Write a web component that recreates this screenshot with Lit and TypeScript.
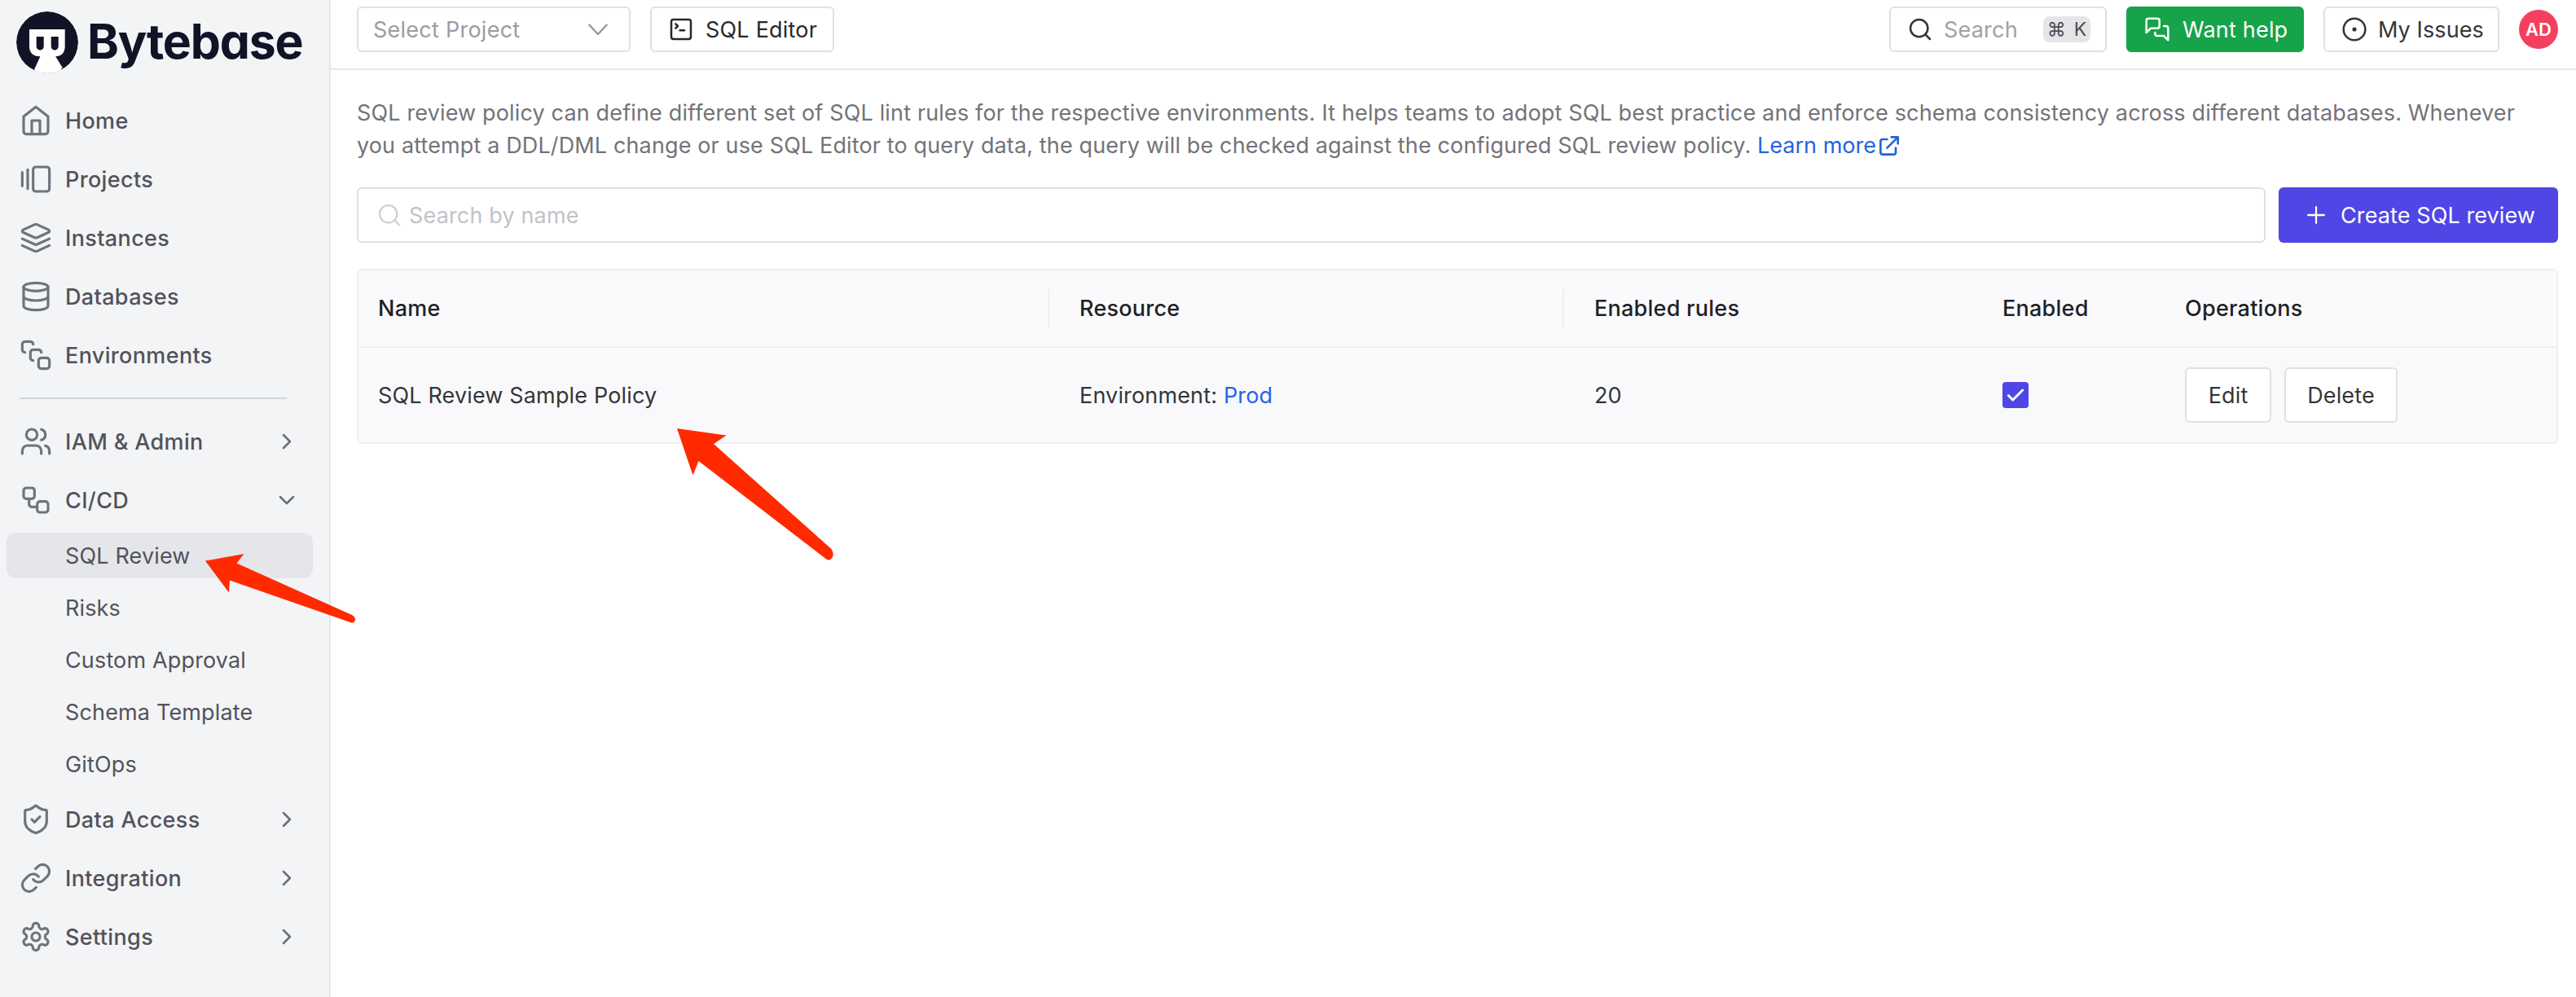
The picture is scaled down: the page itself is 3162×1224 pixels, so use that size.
import { LitElement, html, css, svg, nothing, TemplateResult, SVGTemplateResult } from "lit";
import { customElement, property } from "lit/decorators.js";
import { classMap } from "lit/directives/class-map.js";

const ICONS: Record<string, SVGTemplateResult> = {
  home: svg`<path d="m3 9 9-7 9 7v11a2 2 0 0 1-2 2H5a2 2 0 0 1-2-2z"/><path d="M9 22V12h6v10"/>`,
  projects: svg`<path d="M2 7v10"/><path d="M6 5v14"/><rect width="12" height="18" x="10" y="3" rx="2"/>`,
  layers: svg`<path d="m12.83 2.18a2 2 0 0 0-1.66 0L2.6 6.08a1 1 0 0 0 0 1.83l8.58 3.91a2 2 0 0 0 1.66 0l8.58-3.9a1 1 0 0 0 0-1.83Z"/><path d="m22 17.65-9.17 4.16a2 2 0 0 1-1.66 0L2 17.65"/><path d="m22 12.65-9.17 4.16a2 2 0 0 1-1.66 0L2 12.65"/>`,
  database: svg`<ellipse cx="12" cy="5" rx="9" ry="3"/><path d="M3 5V19A9 3 0 0 0 21 19V5"/><path d="M3 12A9 3 0 0 0 21 12"/>`,
  stack: svg`<path d="M4 10c-1.1 0-2-.9-2-2V4c0-1.1.9-2 2-2h4c1.1 0 2 .9 2 2"/><path d="M10 16c-1.1 0-2-.9-2-2v-4c0-1.1.9-2 2-2h4c1.1 0 2 .9 2 2"/><rect width="8" height="8" x="14" y="14" rx="2"/>`,
  users: svg`<path d="M16 21v-2a4 4 0 0 0-4-4H6a4 4 0 0 0-4 4v2"/><circle cx="9" cy="7" r="4"/><path d="M22 21v-2a4 4 0 0 0-3-3.87"/><path d="M16 3.13a4 4 0 0 1 0 7.75"/>`,
  workflow: svg`<rect width="8" height="8" x="3" y="3" rx="2"/><path d="M7 11v4a2 2 0 0 0 2 2h4"/><rect width="8" height="8" x="13" y="13" rx="2"/>`,
  shield: svg`<path d="M20 13c0 5-3.5 7.5-7.66 8.95a1 1 0 0 1-.67-.01C7.5 20.5 4 18 4 13V6a1 1 0 0 1 1-1c2 0 4.5-1.2 6.24-2.72a1.17 1.17 0 0 1 1.52 0C14.51 3.81 17 5 19 5a1 1 0 0 1 1 1z"/><path d="m9 12 2 2 4-4"/>`,
  link: svg`<path d="M10 13a5 5 0 0 0 7.54.54l3-3a5 5 0 0 0-7.07-7.07l-1.72 1.71"/><path d="M14 11a5 5 0 0 0-7.54-.54l-3 3a5 5 0 0 0 7.07 7.07l1.71-1.71"/>`,
  settings: svg`<path d="M12.22 2h-.44a2 2 0 0 0-2 2v.18a2 2 0 0 1-1 1.73l-.43.25a2 2 0 0 1-2 0l-.15-.08a2 2 0 0 0-2.73.73l-.22.38a2 2 0 0 0 .73 2.73l.15.1a2 2 0 0 1 1 1.72v.51a2 2 0 0 1-1 1.74l-.15.09a2 2 0 0 0-.73 2.73l.22.38a2 2 0 0 0 2.73.73l.15-.08a2 2 0 0 1 2 0l.43.25a2 2 0 0 1 1 1.73V20a2 2 0 0 0 2 2h.44a2 2 0 0 0 2-2v-.18a2 2 0 0 1 1-1.73l.43-.25a2 2 0 0 1 2 0l.15.08a2 2 0 0 0 2.73-.73l.22-.39a2 2 0 0 0-.73-2.73l-.15-.08a2 2 0 0 1-1-1.74v-.5a2 2 0 0 1 1-1.74l.15-.09a2 2 0 0 0 .73-2.73l-.22-.38a2 2 0 0 0-2.73-.73l-.15.08a2 2 0 0 1-2 0l-.43-.25a2 2 0 0 1-1-1.73V4a2 2 0 0 0-2-2z"/><circle cx="12" cy="12" r="3"/>`,
  chevronRight: svg`<path d="m9 18 6-6-6-6"/>`,
  chevronDown: svg`<path d="m6 9 6 6 6-6"/>`,
  selectArrow: svg`<path d="m4 8 8 8.5 8-8.5"/>`,
  terminal: svg`<path d="m7 11 2-2-2-2"/><path d="M11 13h4"/><rect width="18" height="18" x="3" y="3" rx="2"/>`,
  search: svg`<circle cx="11" cy="11" r="8"/><path d="m21 21-4.3-4.3"/>`,
  messages: svg`<path d="M14 9a2 2 0 0 1-2 2H6l-4 4V4a2 2 0 0 1 2-2h8a2 2 0 0 1 2 2z"/><path d="M18 9h2a2 2 0 0 1 2 2v11l-4-4h-6a2 2 0 0 1-2-2v-1"/>`,
  circleDot: svg`<circle cx="12" cy="12" r="10"/><circle cx="12" cy="12" r="1"/>`,
  external: svg`<path d="M10 6H6a2 2 0 0 0-2 2v10a2 2 0 0 0 2 2h10a2 2 0 0 0 2-2v-4"/><path d="M14 4h6v6"/><path d="M20 4 10 14"/>`,
  plus: svg`<path d="M12 4.6v14.8"/><path d="M4.6 12h14.8"/>`,
  check: svg`<path d="m4 12.5 5 5 11-11"/>`,
};

@customElement("ui-icon")
class UiIcon extends LitElement {
  @property() name = "";
  static styles = css`
    :host {
      display: inline-block;
      flex: none;
      width: 32px;
      height: 32px;
    }
    svg {
      display: block;
      width: 100%;
      height: 100%;
      fill: none;
      stroke: currentColor;
      stroke-width: var(--stroke, 2);
      stroke-linecap: round;
      stroke-linejoin: round;
    }
  `;
  render() {
    return html`<svg viewBox="0 0 24 24">${ICONS[this.name]}</svg>`;
  }
}

interface NavItem {
  label: string;
  icon: string;
  arrow?: "chevronRight" | "chevronDown";
  children?: string[];
}

const PRIMARY: NavItem[] = [
  { label: "Home", icon: "home" },
  { label: "Projects", icon: "projects" },
  { label: "Instances", icon: "layers" },
  { label: "Databases", icon: "database" },
  { label: "Environments", icon: "stack" },
];

const SECONDARY: NavItem[] = [
  { label: "IAM & Admin", icon: "users", arrow: "chevronRight" },
  {
    label: "CI/CD",
    icon: "workflow",
    arrow: "chevronDown",
    children: ["SQL Review", "Risks", "Custom Approval", "Schema Template", "GitOps"],
  },
  { label: "Data Access", icon: "shield", arrow: "chevronRight" },
  { label: "Integration", icon: "link", arrow: "chevronRight" },
  { label: "Settings", icon: "settings", arrow: "chevronRight" },
];

@customElement("app-sidebar")
class AppSidebar extends LitElement {
  @property() active = "SQL Review";
  static styles = css`
    :host {
      display: flex;
      flex-direction: column;
      box-sizing: border-box;
      width: 406px;
      height: 100%;
      background: #f3f4f6;
      border-right: 2px solid #e4e5e8;
      color: #52525b;
    }
    .brand {
      display: flex;
      align-items: flex-start;
      height: 76px;
      padding: 14px 0 30px 20px;
      color: #111427;
    }
    .mark {
      width: 76px;
      height: 76px;
    }
    .wordmark {
      margin-left: 11px;
      font-size: 59px;
      line-height: 73px;
      font-weight: 700;
      letter-spacing: -1.25px;
      font-feature-settings: "cv11";
      white-space: nowrap;
    }
    .nav {
      display: flex;
      flex-direction: column;
      gap: 16px;
    }
    .item {
      display: flex;
      align-items: center;
      height: 56px;
      padding: 0 36px 0 24px;
      font-weight: 500;
      letter-spacing: 0.35px;
      white-space: nowrap;
    }
    .icon {
      width: 40px;
      height: 40px;
      color: #6f737d;
      --stroke: 1.9;
    }
    .label {
      flex: 1;
      margin-left: 16px;
    }
    .arrow {
      color: #6b6e76;
      --stroke: 1.9;
    }
    .divider {
      height: 2px;
      margin: 24px 52px 24px 24px;
      background: #d3d5d8;
    }
    .children {
      display: flex;
      flex-direction: column;
      gap: 8px;
      margin: -4px 0;
    }
    .child {
      display: flex;
      align-items: center;
      height: 56px;
      margin: 0 20px 0 8px;
      padding-left: 72px;
      border-radius: 12px;
      letter-spacing: 0.15px;
    }
    .child.active {
      background: #e5e6ea;
    }
  `;

  private item(i: NavItem): TemplateResult {
    return html`<div class="item">
        <ui-icon class="icon" name=${i.icon}></ui-icon>
        <span class="label">${i.label}</span>
        ${i.arrow ? html`<ui-icon class="arrow" name=${i.arrow}></ui-icon>` : nothing}
      </div>
      ${i.children
        ? html`<div class="children">
            ${i.children.map(
              (c) => html`<div class=${classMap({ child: true, active: c === this.active })}>${c}</div>`
            )}
          </div>`
        : nothing}`;
  }

  render() {
    return html`
      <div class="brand">
        <svg class="mark" viewBox="0 0 76 76">
          <defs><clipPath id="disc"><circle cx="38" cy="38" r="38" /></clipPath></defs>
          <g clip-path="url(#disc)">
            <circle cx="38" cy="38" r="38" fill="#111427" />
            <path
              fill="#fff"
              d="M16 22H59.7V43C59.7 51 55 55.3 48 55.3L57 76H21L30.5 55.3H29C21 55.3 16 51 16 43Z"
            />
            <path fill="#fff" d="M29.5 55L22 71.5Q38 80 57 69.5L48 55Z" />
            <path
              fill="#111427"
              d="M24.7 31H33.7V43a4.5 4.5 0 0 1-9 0ZM42.7 31H51.7V43a4.5 4.5 0 0 1-9 0Z"
            />
          </g>
        </svg>
        <span class="wordmark">Bytebase</span>
      </div>
      <nav class="nav">${PRIMARY.map((i) => this.item(i))}</nav>
      <div class="divider"></div>
      <nav class="nav">${SECONDARY.map((i) => this.item(i))}</nav>
    `;
  }
}

@customElement("app-header")
class AppHeader extends LitElement {
  static styles = css`
    :host {
      display: flex;
      justify-content: space-between;
      box-sizing: border-box;
      height: 86px;
      padding: 8px 22px 0 32px;
      border-bottom: 2px solid #e5e6e9;
    }
    .group {
      display: flex;
      gap: 24px;
      height: 56px;
      align-items: center;
    }
    .box {
      display: flex;
      align-items: center;
      box-sizing: border-box;
      height: 56px;
      border: 2px solid #e0e0e5;
      border-radius: 6px;
      color: #333639;
      white-space: nowrap;
      letter-spacing: 0.2px;
    }
    .box ui-icon {
      --stroke: 1.9;
    }
    .select {
      width: 336px;
      padding: 0 22px 0 18px;
      justify-content: space-between;
      color: #9b9ca3;
      letter-spacing: 0.25px;
    }
    .editor {
      width: 226px;
      padding-left: 20px;
      gap: 14px;
      color: #29292c;
    }
    .search {
      width: 267px;
      padding: 0 18px 0 20px;
    }
    .hint {
      flex: 1;
      margin-left: 13px;
      color: #a1a1a8;
    }
    .kbd {
      display: flex;
      align-items: center;
      justify-content: center;
      gap: 10px;
      width: 58px;
      height: 32px;
      border-radius: 8px;
      background: #e5e5e7;
      color: #4c4d52;
      font-size: 23px;
      line-height: 32px;
      letter-spacing: 0;
    }
    .help {
      width: 218px;
      padding-left: 20px;
      gap: 15px;
      background: #16a34a;
      border-color: #16a34a;
      color: #fff;
    }
    .issues {
      width: 216px;
      padding-left: 20px;
      gap: 13px;
      letter-spacing: 0.1px;
    }
    .avatar {
      display: flex;
      align-items: center;
      justify-content: center;
      width: 48px;
      height: 48px;
      border-radius: 50%;
      background: #f43f5e;
      color: #fff;
      font-size: 22px;
      font-weight: 600;
    }
  `;
  render() {
    return html`
      <div class="group">
        <div class="box select"><span>Select Project</span><ui-icon name="selectArrow"></ui-icon></div>
        <div class="box editor"><ui-icon name="terminal"></ui-icon>SQL Editor</div>
      </div>
      <div class="group">
        <div class="box search">
          <ui-icon name="search"></ui-icon>
          <span class="hint">Search</span>
          <span class="kbd"><span>⌘</span><span>K</span></span>
        </div>
        <div class="box help"><ui-icon name="messages"></ui-icon>Want help</div>
        <div class="box issues"><ui-icon name="circleDot"></ui-icon>My Issues</div>
        <div class="avatar">AD</div>
      </div>
    `;
  }
}

interface Policy {
  name: string;
  scope: string;
  target: string;
  rules: number;
}

const POLICIES: Policy[] = [
  { name: "SQL Review Sample Policy", scope: "Environment:", target: "Prod", rules: 20 },
];

@customElement("policy-table")
class PolicyTable extends LitElement {
  static styles = css`
    :host {
      display: block;
      border: 2px solid #efeff3;
      border-radius: 6px;
      background: #fafafc;
      color: #333639;
      overflow: hidden;
    }
    .row {
      display: grid;
      grid-template-columns: 861px 632px 501px 224px 1fr;
      align-items: center;
      height: 116px;
      background: #f9f9fb;
    }
    .head {
      height: 93px;
      background: #fafafc;
      border-bottom: 2px solid #efeff2;
      color: #1f2225;
      font-weight: 500;
    }
    .cell {
      display: flex;
      align-items: center;
      padding-left: 24px;
      letter-spacing: 0.15px;
      white-space: pre;
    }
    .head .cell {
      letter-spacing: 0.25px;
    }
    .resizable {
      justify-content: space-between;
      padding-right: 13px;
    }
    .grip {
      width: 2px;
      height: 48px;
      background: #efeff2;
    }
    .link {
      color: #2563eb;
    }
    .ops {
      gap: 16px;
    }
    .button {
      box-sizing: border-box;
      width: 139px;
      height: 68px;
      border: 2px solid #e0e0e5;
      border-radius: 6px;
      background: #fff;
      line-height: 65px;
      text-align: center;
    }
    .edit {
      width: 106px;
    }
    .checkbox {
      display: flex;
      align-items: center;
      justify-content: center;
      width: 32px;
      height: 32px;
      border-radius: 4px;
      background: #4f46e5;
      color: #fff;
    }
    .checkbox ui-icon {
      width: 26px;
      height: 26px;
      --stroke: 2.8;
    }
  `;
  render() {
    return html`
      <div class="row head">
        <div class="cell resizable">Name<span class="grip"></span></div>
        <div class="cell resizable">Resource<span class="grip"></span></div>
        <div class="cell">Enabled rules</div>
        <div class="cell">Enabled</div>
        <div class="cell">Operations</div>
      </div>
      ${POLICIES.map(
        (p) => html`<div class="row">
          <div class="cell">${p.name}</div>
          <div class="cell">${p.scope} <span class="link">${p.target}</span></div>
          <div class="cell">${p.rules}</div>
          <div class="cell"><span class="checkbox"><ui-icon name="check"></ui-icon></span></div>
          <div class="cell ops"><span class="button edit">Edit</span><span class="button">Delete</span></div>
        </div>`
      )}
    `;
  }
}

@customElement("app-root")
class AppRoot extends LitElement {
  static styles = css`
    :host {
      display: flex;
      position: relative;
      width: 3162px;
      height: 1224px;
      overflow: hidden;
      background: #fff;
      font-family: Inter, "Liberation Sans", "DejaVu Sans", sans-serif;
      font-size: 27px;
      line-height: 41px;
    }
    .main {
      flex: 1;
      min-width: 0;
      display: flex;
      flex-direction: column;
    }
    .content {
      display: flex;
      flex-direction: column;
      gap: 32px;
      padding: 32px 22px 0 32px;
    }
    .intro {
      height: 79px;
      padding-top: 1px;
      color: #737378;
      line-height: 40px;
      white-space: nowrap;
      letter-spacing: 0.15px;
    }
    .line {
      display: flex;
    }
    .second {
      letter-spacing: 0.13px;
      white-space: pre;
    }
    .learn {
      display: flex;
      align-items: center;
      letter-spacing: 0;
      color: #2563dc;
    }
    .toolbar {
      display: flex;
      gap: 16px;
    }
    .filter {
      flex: 1;
      display: flex;
      align-items: center;
      gap: 8px;
      box-sizing: border-box;
      height: 68px;
      padding-left: 22px;
      border: 2px solid #e0e0e5;
      border-radius: 6px;
      color: #c2c2c7;
      letter-spacing: 0.15px;
    }
    .filter ui-icon {
      --stroke: 1.6;
      color: #cdced3;
    }
    .create {
      display: flex;
      align-items: center;
      box-sizing: border-box;
      width: 343px;
      height: 68px;
      padding-left: 30px;
      gap: 14px;
      border-radius: 6px;
      background: #4f46e5;
      color: #fff;
      letter-spacing: 0.1px;
    }
    .create ui-icon {
      --stroke: 1.7;
    }
    .overlay {
      position: absolute;
      left: 0;
      top: 0;
      width: 100%;
      height: 100%;
      pointer-events: none;
    }
  `;
  render() {
    return html`
      <app-sidebar></app-sidebar>
      <div class="main">
        <app-header></app-header>
        <div class="content">
          <div class="intro">
            <div class="line">SQL review policy can define different set of SQL lint rules for the respective environments. It helps teams to adopt SQL best practice and enforce schema consistency across different databases. Whenever</div>
            <div class="line second">you attempt a DDL/DML change or use SQL Editor to query data, the query will be checked against the configured SQL review policy. <span class="learn">Learn more<ui-icon name="external"></ui-icon></span></div>
          </div>
          <div class="toolbar">
            <div class="filter"><ui-icon name="search"></ui-icon>Search by name</div>
            <div class="create"><ui-icon name="plus"></ui-icon>Create SQL review</div>
          </div>
          <policy-table></policy-table>
        </div>
      </div>
      <svg class="overlay" viewBox="0 0 3162 1224" fill="#ff2a00">
        <path
          d="M252 688.5L299.5 680L290.5 691.5L432 755Q437.5 758.5 435.5 762.5Q434 765.5 430 764L282 712.5L281 727.5Z"
        />
        <path
          d="M831 526L891.5 534.5L876 545L1020.5 674Q1024 679 1022 684Q1019 688.5 1015 687L857.5 566L850.5 583.5Z"
        />
      </svg>
    `;
  }
}
